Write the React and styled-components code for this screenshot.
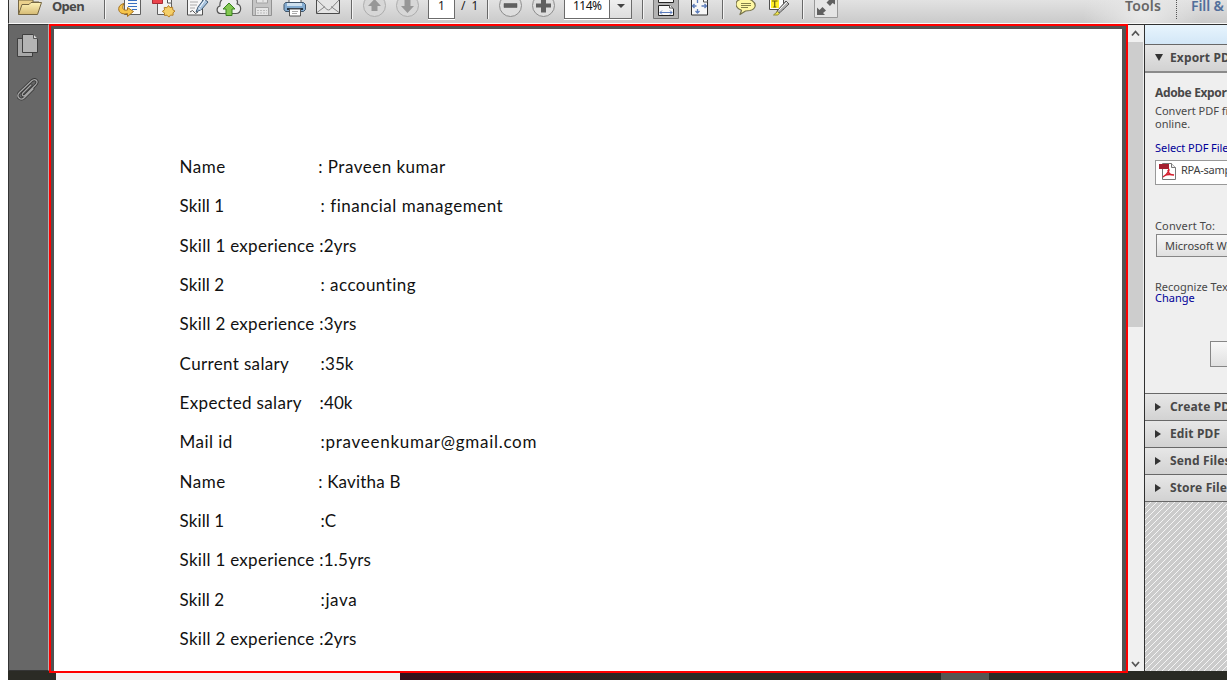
import React from "react";
import styled, { createGlobalStyle } from "styled-components";

const Global = createGlobalStyle`
  * { box-sizing: border-box; }
  html, body { margin: 0; background: #fff; overflow: hidden; }
  body { font-family: "Noto Sans", "Open Sans", sans-serif; color: #404040; }
  svg { display: block; flex: none; }
`;

const Window = styled.div`
  width: 1219px;
  height: 680px;
  margin-left: 8px;
  display: flex;
  flex-direction: column;
  overflow: hidden;
`;

const Toolbar = styled.div`
  height: 24px;
  flex: none;
  display: flex;
  border-left: 1px solid #303030;
  border-bottom: 1px solid #f8f8f8;
  background: linear-gradient(#e2e2e2, #cacaca);
  overflow: hidden;
`;

const Slot = styled.div`
  flex: none;
  margin-left: ${(p) => p.$gap || 0}px;
  height: 24px;
`;

const Separator = styled.div`
  flex: none;
  margin-left: ${(p) => p.$gap}px;
  width: 2px;
  height: 19px;
  background: linear-gradient(90deg, #686868 50%, #f4f4f4 50%);
`;

const OpenLabel = styled.div`
  flex: none;
  margin-left: 9px;
  width: 34px;
  font: 700 13px/13px "Noto Sans", sans-serif;
  letter-spacing: -0.7px;
  white-space: nowrap;
  color: #484848;
`;

const PageBox = styled.div`
  flex: none;
  margin-left: 8px;
  width: 27px;
  height: 19px;
  border: 1px solid #6b6b6b;
  border-top: 0;
  background: #fff;
  color: #222;
  font: 12px/12px "Noto Sans", sans-serif;
  text-align: center;
  box-shadow: 0 1px 0 #fff;
`;

const PageCount = styled.div`
  flex: none;
  margin-left: 6px;
  width: 19px;
  color: #222;
  font: 12px/12px "Noto Sans", sans-serif;
  word-spacing: 3px;
  white-space: pre;
`;

const ZoomBox = styled.div`
  flex: none;
  margin-left: 8px;
  width: 68px;
  height: 19px;
  display: flex;
  border: 1px solid #6b6b6b;
  border-top: 0;
  background: #fff;
  box-shadow: 0 1px 0 #fff;
`;

const ZoomValue = styled.div`
  width: 45px;
  padding-left: 8px;
  color: #111;
  font: 12px/12px "Noto Sans", sans-serif;
  letter-spacing: -0.55px;
  border-right: 1px solid #6b6b6b;
`;

const ZoomArrow = styled.div`
  flex: 1;
  display: flex;
  justify-content: center;
  background: linear-gradient(#efefef, #dedede);
  padding-top: 4px;
`;

const PaneTabs = styled.div`
  margin-left: 243px;
  flex: 1;
  display: flex;
  background: radial-gradient(ellipse 60px 36px at 62px 14px, #e9e9e9, #e9e9e900);
`;

const PaneTab = styled.div`
  flex: none;
  width: ${(p) => p.$width}px;
  padding-left: ${(p) => p.$inset}px;
  color: ${(p) => p.$color};
  font: 600 14px/12px "Noto Sans", sans-serif;
  letter-spacing: ${(p) => p.$spacing}px;
  white-space: nowrap;
`;

const TabDivider = styled.div`
  width: 0;
  height: 19px;
  border-left: 1px dotted #555;
`;

const Workspace = styled.div`
  height: 649px;
  flex: none;
  display: flex;
`;

const Sidebar = styled.div`
  width: 41px;
  height: 647px;
  flex: none;
  display: flex;
  flex-direction: column;
  align-items: flex-start;
  border: 1px solid #353535;
  border-right-color: #b0b0b0;
  background: #676767;
  padding: 9px 0 0 8px;
  gap: 20px;
`;

const Viewer = styled.div`
  position: relative;
  z-index: 1;
  width: 1079px;
  height: 649px;
  flex: none;
  border: 2px solid #ff0000;
  background: #525252;
  padding: 3px 4px 0 3px;
`;

const Page = styled.div`
  height: 100%;
  background: #fff;
  padding: 118.4px 0 0 125.6px;
  overflow: hidden;
`;

const Line = styled.div`
  height: 39.33px;
  display: flex;
  align-items: center;
  font: 17px/22px Lato, "Noto Sans", sans-serif;
  font-variant-ligatures: none;
  color: #111;
  white-space: pre;
`;

const Field = styled.span`
  width: ${(p) => p.$width}px;
  flex: none;
  letter-spacing: ${(p) => p.$spacing || 0}px;
`;

const FieldValue = styled.span`
  letter-spacing: ${(p) => p.$spacing || 0}px;
`;

const Scrollbar = styled.div`
  width: 16px;
  flex: none;
  display: flex;
  flex-direction: column;
  border-top: 1px solid #303030;
  background: #f0f0f0;
  height: 648px;
`;

const Thumb = styled.div`
  width: 15px;
  height: 285px;
  background: #cdcdcd;
`;

const Filler = styled.div`
  flex: 1;
`;

const TaskPane = styled.div`
  flex: 1;
  min-width: 0;
  height: 647px;
  display: flex;
  flex-direction: column;
  border-left: 1px solid #303030;
  border-top: 1px solid #303030;
  background: #efefef;
  overflow: hidden;
`;

const Highlight = styled.div`
  height: 19px;
  flex: none;
  background: linear-gradient(#e7f4fd, #d3e7f7);
`;

const Section = styled.div`
  height: ${(p) => (p.$open ? 29 : 27)}px;
  flex: none;
  display: flex;
  align-items: center;
  gap: ${(p) => (p.$open ? 7 : 9)}px;
  padding: 0 0 1px 10px;
  border-top: 1px solid #686868;
  border-bottom: ${(p) => (p.$open ? "2px solid #8b8b8b" : "0")};
  background: linear-gradient(#e7e7e7, #d2d2d2);
  font: 700 12px/16px "Noto Sans", sans-serif;
  letter-spacing: 0.15px;
  white-space: nowrap;
  color: #484848;
`;

const ExportBody = styled.div`
  height: 320px;
  flex: none;
  display: flex;
  flex-direction: column;
  align-items: flex-start;
  padding: 12px 0 0 10px;
  font: 11px/13px "Noto Sans", sans-serif;
  white-space: nowrap;
`;

const BodyTitle = styled.div`
  font-weight: 700;
  font-size: 12px;
  line-height: 16px;
  letter-spacing: -0.35px;
  color: #484848;
`;

const BodyText = styled.div`
  margin-top: ${(p) => p.$top || 0}px;
  height: ${(p) => p.$height || 13}px;
  letter-spacing: ${(p) => p.$spacing || 0}px;
  color: ${(p) => (p.$link ? "#000099" : "#484848")};
`;

const FileBox = styled.div`
  margin-top: 6px;
  width: 110px;
  height: 25px;
  flex: none;
  display: flex;
  border: 1px solid #999;
  background: #fff;
  padding: 2px 0 0 3px;
  gap: 5px;
  line-height: 14px;
  letter-spacing: -0.25px;
`;

const PanelButton = styled.div`
  margin: ${(p) => p.$top}px 0 0 ${(p) => p.$left}px;
  width: 110px;
  height: ${(p) => p.$height}px;
  flex: none;
  border: 1px solid #868686;
  background: linear-gradient(#f8f8f8, #e0e0e0);
  padding-left: 8px;
  line-height: 21px;
`;

const Hatch = styled.div`
  flex: 1;
  display: flex;
  border-top: 1px solid #686868;
  background: #cbcbcb;
`;

const Taskbar = styled.div`
  height: 9px;
  margin-top: -2px;
  flex: none;
  display: flex;
  align-items: flex-end;
  background: linear-gradient(90deg, #2b2b25 48px, #35101b 392px, #31151b 450px, #292a24 650px);
`;

const TaskItem = styled.div`
  margin-left: ${(p) => p.$gap}px;
  width: ${(p) => p.$width}px;
  height: 7px;
  background: ${(p) => p.$color};
`;

function Icon({ x, w, children }) {
  return (
    <svg width={w} height="24" viewBox={`${x} 0 ${w} 24`} fill="none" strokeLinejoin="round">
      {children}
    </svg>
  );
}

const Fold = ({ x, y = 0, s = 4 }) => (
  <path d={`M${x} ${y}v${s}h${s}`} fill="#fff" stroke="#555" />
);

// label, label column width, label tracking, value, value tracking
const records = [
  ["Name", 138.6, 0.5, ": Praveen kumar", 0.5],
  ["Skill 1", 141, 0.1, ": financial management", 0.5],
  ["Skill 1 experience", 139.6, 0.28, ":2yrs", 0.2],
  ["Skill 2", 141, 0.1, ": accounting", 0.45],
  ["Skill 2 experience", 139.6, 0.28, ":3yrs", 0.2],
  ["Current salary", 141, 0.35, ":35k", 0.1],
  ["Expected salary", 140, 0.35, ":40k", 0.1],
  ["Mail id", 141, 0.45, ":praveenkumar@gmail.com", 0.72],
  ["Name", 138.6, 0.5, ": Kavitha B", 0.2],
  ["Skill 1", 141, 0.1, ":C", 0],
  ["Skill 1 experience", 139.6, 0.28, ":1.5yrs", 0.25],
  ["Skill 2", 141, 0.1, ":java", 0.6],
  ["Skill 2 experience", 139.6, 0.28, ":2yrs", 0.2],
];

function MainToolbar() {
  return (
    <Toolbar>
      <Slot $gap={8}>
        <Icon x={17} w={26}>
          <defs>
            <linearGradient id="folder" x2="0" y2="1"><stop stopColor="#fff3b8" /><stop offset="1" stopColor="#d5ba74" /></linearGradient>
          </defs>
          <path d="M18.5 14.5V0H33v2h6v3" fill="#ead08c" stroke="#756642" />
          <path d="M18.5 14.5L22 4.5H29l2-2H41.5L37.5 14.5Z" fill="url(#folder)" stroke="#756642" />
        </Icon>
      </Slot>
      <OpenLabel>Open</OpenLabel>
      <Separator $gap={18} />
      <Slot $gap={12}>
        <Icon x={118} w={25}>
          <path d="M124.5 -2h16v16.500h-16z" fill="#fafafa" stroke="#606060" />
          <path d="M128 .5h9M128 3.500h9M128 6.500h9M132 9.500h5" stroke="#386fc0" strokeWidth="1.200" />
          <path d="M124 3.500C117 5 117.500 12 122 13.500Q125 14.500 127.500 13.500V16.500L133.500 11.500L127.500 7.500V10C123 11 121.500 8 124 3.500Z" fill="#f6c54b" stroke="#a57220" />
        </Icon>
      </Slot>
      <Slot $gap={9}>
        <Icon x={152} w={24}>
          <path d="M157.500 -2H171.500V14.500H157.500Z" fill="#f3f3f3" stroke="#606060" />
          <Fold x={167.5} y={-1} />
          <path d="M152.500 -2H162.500V3.500H152.500Z" fill="#eb444c" stroke="#a82c34" />
          <path d="M168.500 5.500l1.500 2.100 2.600-.4.200 2.600 2.200 1.300-2 1.700.1 2.400-2.600-.1-1.600 2-1.900-1.900-2.500.3v-2.600l-2.200-1.500 2.200-1.600-.3-2.400 2.700.3Z" fill="#f5cf67" stroke="#b47e27" />
        </Icon>
      </Slot>
      <Slot $gap={10}>
        <Icon x={186} w={24}>
          <path d="M187.500 -2H202.500V15H187.500Z" fill="#f7f7f7" stroke="#505050" />
          <path d="M190 2h8M190 5h7M190 8h5" stroke="#aaa" />
          <path d="M190 12q3-3 4 0t4 0" stroke="#555" />
          <path d="M196 12L198 7L204 -1L208 2L201.500 9.500Z" fill="#a8c4df" stroke="#3f5972" />
          <path d="M198.500 8l2 1.600M205 0l-5 7" stroke="#f7fbff" />
        </Icon>
      </Slot>
      <Slot $gap={6}>
        <Icon x={216} w={26}>
          <path d="M223 13.500H221C216 13.500 216 7 220 6C219-1 226-4 230-2C234-4 239 0 237 4C242 5 242 13 236 13.500Z" fill="#eee" stroke="#555" strokeWidth="1.200" />
          <path d="M229 3l6 6h-3v6.500h-6V9h-3Z" fill="#83c850" stroke="#39811e" />
        </Icon>
      </Slot>
      <Slot $gap={10}>
        <Icon x={252} w={21}>
          <path d="M252.500 -1H271.500V15.500H252.500Z" fill="#c5c5c5" stroke="#929292" />
          <path d="M256.500 -1v4h11v-4M255.500 15V7.500h13V15" fill="#e6e6e6" stroke="#a3a3a3" />
          <path d="M263 0v2M257 10.500h10M257 13h10" stroke="#bbb" strokeDasharray="2 1" />
        </Icon>
      </Slot>
      <Slot $gap={10}>
        <Icon x={283} w={24}>
          <path d="M289 3V-1h12v4" fill="#fff" stroke="#555" />
          <path d="M285.500 2.500h18l2 2v5l-2 2h-18l-1.500-2v-5Z" fill="#83abd0" stroke="#3f546a" />
          <path d="M287 3h15v3h-15Z" fill="#cfe1ef" />
          <path d="M287 9h16" stroke="#263544" strokeWidth="2" />
          <path d="M289.500 9h11v7h-11Z" fill="#fff" stroke="#555" />
          <path d="M292 11.500h6M292 13.500h5" stroke="#aaa" />
        </Icon>
      </Slot>
      <Slot $gap={9}>
        <Icon x={316} w={25}>
          <path d="M316.500 -2H339.500V13.500H316.500Z" fill="#e5e5e5" stroke="#4b4b4b" />
          <path d="M317 0l10 9.500q1.500 1 3 0L339 0M317 12.500l8-6M339 12.500l-8-6" stroke="#858585" />
        </Icon>
      </Slot>
      <Separator $gap={10} />
      <Slot $gap={10}>
        <Icon x={363} w={24}>
          <circle cx="374.500" cy="5.500" r="11" fill="#d7d7d7" stroke="#adadad" />
          <path d="M374.500 -1l6.500 7h-3.500v5h-6V6H368Z" fill="#979797" />
        </Icon>
      </Slot>
      <Slot $gap={9}>
        <Icon x={396} w={24}>
          <circle cx="407.500" cy="5.500" r="11" fill="#d7d7d7" stroke="#adadad" />
          <path d="M407.500 13l6.500-7h-3.500V0h-6v6H401Z" fill="#979797" />
        </Icon>
      </Slot>
      <PageBox>1</PageBox>
      <PageCount>/ 1</PageCount>
      <Separator $gap={7} />
      <Slot $gap={9}>
        <Icon x={498} w={25}>
          <circle cx="510.500" cy="5.500" r="11" fill="#dedede" stroke="#8d8d8d" />
          <path d="M504 3.500h13v4h-13Z" fill="#606060" stroke="#505050" strokeWidth=".5" />
        </Icon>
      </Slot>
      <Slot $gap={9}>
        <Icon x={532} w={24}>
          <circle cx="543.500" cy="5.500" r="11" fill="#dedede" stroke="#8d8d8d" />
          <path d="M541 -1h5v4.500h5v4h-5V12.500h-5V7.500h-5v-4h5Z" fill="#606060" />
        </Icon>
      </Slot>
      <ZoomBox>
        <ZoomValue>114%</ZoomValue>
        <ZoomArrow>
          <svg width="8" height="4"><path d="M0 0h8L4 4Z" fill="#444" /></svg>
        </ZoomArrow>
      </ZoomBox>
      <Separator $gap={10} />
      <Slot $gap={9}>
        <Icon x={653} w={27}>
          <path d="M653.500 -2H678.500V18.500H653.500Z" fill="#b3b3b3" stroke="#747474" />
          <path d="M658.500 -2H673.500V2.500H658.500ZM658.500 15.500V5.500H670l3.500 3.500v6.500Z" fill="#f8f8f8" stroke="#252525" />
          <Fold x={669.5} y={5} s={3} />
          <path d="M660 12.500h12M662 10.500l-2 2 2 2M670 10.500l2 2-2 2" stroke="#587abc" />
        </Icon>
      </Slot>
      <Slot $gap={11}>
        <Icon x={691} w={19}>
          <path d="M691.500 -2H707.500V15H691.500Z" fill="#f7f7f7" stroke="#303030" />
          <Fold x={703.5} y={-2} />
          <path d="M697.500 13V9M695.500 11l2 2 2-2M697.500 -1v4M692.500 6h4M694.500 4l-2 2 2 2M706.500 6h-5M704.500 4l2 2-2 2" stroke="#5d7dbb" strokeWidth="1.300" />
        </Icon>
      </Slot>
      <Separator $gap={12} />
      <Slot $gap={12}>
        <Icon x={736} w={21}>
          <path d="M741 10C734 7 735 1 740 -.5Q746-3 752 .5C757 4 756 9 750 10.500L745.500 11L740 14.500L741.500 10.500Z" fill="#fff8a4" stroke="#77734a" strokeWidth="1.200" />
          <path d="M741 3.500h10M741 5.500h10M741 7.500h7" stroke="#777341" strokeWidth=".9" />
        </Icon>
      </Slot>
      <Slot $gap={12}>
        <Icon x={769} w={21}>
          <path d="M769.500 -2H783.500V9.500H769.500Z" fill="#fff" stroke="#505050" />
          <path d="M771 -1h8v9h-8Z" fill="#ffef27" />
          <path d="M772 1h5.500M774.700 1v6M773.300 7h3" stroke="#665c10" strokeWidth="1.200" />
          <path d="M777 11L786 1L789 4L780.500 12L777 13Z" fill="#b5b5b5" stroke="#555" />
          <path d="M779 10l8-8" stroke="#f3f3f3" />
          <path d="M777.500 11.500l2 2-2 1.500h-4Z" fill="#f0e44a" stroke="#8e8939" />
        </Icon>
      </Slot>
      <Separator $gap={12} />
      <Slot $gap={10}>
        <Icon x={814} w={24}>
          <path d="M814.500 -2H837.500V17.500H814.500Z" fill="#e5e5e5" stroke="#999" />
          <path d="M817 15V7.500L819.500 10L822.500 7L826 10.500L823 13L825 15ZM835 -2V4.500L832.500 3L830 6L826.500 2.500L829 0V-2Z" fill="#606060" />
        </Icon>
      </Slot>
      <PaneTabs>
        <PaneTab $width={95} $inset={44} $spacing={0.2} $color="#666">Tools</PaneTab>
        <TabDivider />
        <PaneTab $width={60} $inset={14} $spacing={-0.1} $color="#526f9b">Fill &amp; Sign</PaneTab>
      </PaneTabs>
    </Toolbar>
  );
}

const Arrow = ({ open }) =>
  open ? (
    <svg width="8" height="7"><path d="M0 0h8L4 7Z" fill="#333" /></svg>
  ) : (
    <svg width="6" height="8"><path d="M0 0v8L6 4Z" fill="#333" /></svg>
  );

function ToolsPane() {
  return (
    <TaskPane>
      <Highlight />
      <Section $open><Arrow open />Export PDF Files</Section>
      <ExportBody>
        <BodyTitle>Adobe ExportPDF</BodyTitle>
        <BodyText $top={3}>Convert PDF files to Word</BodyText>
        <BodyText>online.</BodyText>
        <BodyText $top={11} $link $spacing={-0.05}>Select PDF File:</BodyText>
        <FileBox>
          <svg width="17" height="18" viewBox="0 0 17 18" fill="none">
            <path d="M3.500 .5h9l4 4v12h-13Z" fill="#fff" stroke="#777" />
            <path d="M12.500 .5v4h4" fill="#eee" stroke="#777" />
            <path d="M0 1h10v5H0Z" fill="#a52030" />
            <path d="M9 6c2 0 1 4-5 8M9 7c0 3 2 5 6 5M5 13c3-2 6-2 10-1" stroke="#d4202f" strokeWidth="1.500" />
          </svg>
          RPA-sample.pdf
        </FileBox>
        <BodyText $top={34} $spacing={0.15}>Convert To:</BodyText>
        <PanelButton $top={2} $left={1} $height={23}>Microsoft Word (*.docx)</PanelButton>
        <BodyText $top={23} $height={11}>Recognize Text in English</BodyText>
        <BodyText $link>Change</BodyText>
        <PanelButton $top={37} $left={55} $height={26} />
      </ExportBody>
      {["Create PDF Files", "Edit PDF", "Send Files", "Store Files"].map((name) => (
        <Section key={name}><Arrow />{name}</Section>
      ))}
      <Hatch>
        <svg width="100%" height="100%">
          <defs>
            <pattern id="diagonal" width="6" height="6" patternUnits="userSpaceOnUse">
              <path d="M-1 7L7-1" stroke="#f5f5f5" strokeWidth="1" />
            </pattern>
          </defs>
          <rect width="100%" height="100%" fill="url(#diagonal)" />
        </svg>
      </Hatch>
    </TaskPane>
  );
}

export default function App() {
  return (
    <Window>
      <Global />
      <MainToolbar />
      <Workspace>
        <Sidebar>
          <svg width="22" height="24" viewBox="0 0 22 24">
            <path d="M.5 4.500h15v18H.5Z" fill="#a7a7a7" stroke="#3f3f3f" />
            <path d="M5.500 .5h11l4 4v14h-15Z" fill="#b4b4b4" stroke="#3f3f3f" />
            <path d="M16.500 .5v4h4" fill="#ddd" stroke="#555" />
          </svg>
          <svg width="22" height="24" viewBox="0 0 22 24" fill="none" strokeLinecap="round">
            <path d="M14 7L6 15c-2 2 .5 4 2.500 2L18.500 7c4-4-.5-7-4-4L2.500 14.500c-4 4 1 9 5 5L16 11" stroke="#373737" strokeWidth="3" />
            <path d="M14 7L6 15c-2 2 .5 4 2.500 2L18.500 7c4-4-.5-7-4-4L2.500 14.500c-4 4 1 9 5 5L16 11" stroke="#a5a5a5" strokeWidth="1.300" />
          </svg>
        </Sidebar>
        <Viewer>
          <Page>
            {records.map(([label, width, labelSpacing, value, valueSpacing], i) => (
              <Line key={i}>
                <Field $width={width} $spacing={labelSpacing}>{label}</Field>
                <FieldValue $spacing={valueSpacing}>{value}</FieldValue>
              </Line>
            ))}
          </Page>
        </Viewer>
        <Scrollbar>
          <svg width="15" height="17"><path d="M4 10.500l3.500-4 3.500 4" fill="none" stroke="#555" strokeWidth="1.800" /></svg>
          <Thumb />
          <Filler />
          <svg width="15" height="16"><path d="M4 6l3.500 4L11 6" fill="none" stroke="#555" strokeWidth="1.800" /></svg>
        </Scrollbar>
        <ToolsPane />
      </Workspace>
      <Taskbar>
        <TaskItem $gap={48} $width={344} $color="#f2f2f2" />
        <TaskItem $gap={541} $width={48} $color="#555652" />
      </Taskbar>
    </Window>
  );
}
